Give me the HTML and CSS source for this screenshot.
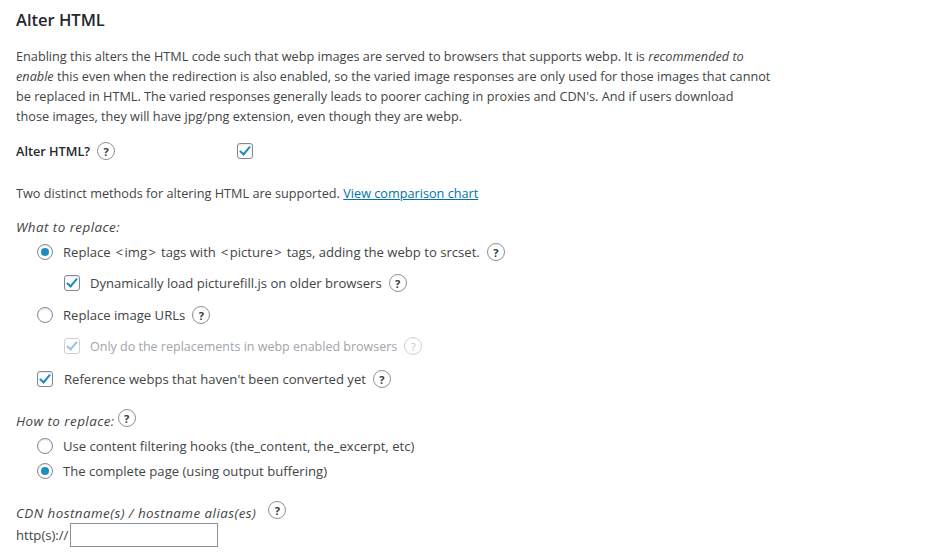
FILE: index.html
```html
<!DOCTYPE html>
<html lang="en">
<head>
    <meta charset="UTF-8">
    <title>Alter HTML</title>
    <link rel="stylesheet" href="styles.css">
</head>
<body>
    <div class="wrap">
        <h2 class="title">Alter HTML</h2>
        <p class="intro">Enabling this alters the HTML code such that webp images are served to browsers that supports webp. It is <em>recommended to<br>enable</em> this even when the redirection is also enabled, so the varied image responses are only used for those images that cannot<br>be replaced in HTML. The varied responses generally leads to poorer caching in proxies and CDN's. And if users download<br>those images, they will have jpg/png extension, even though they are webp.</p>

        <div class="row row-main">
            <div class="th">Alter HTML? <span class="help">?</span></div>
            <span class="cb checked"></span>
        </div>

        <div class="row row-desc">Two distinct methods for altering HTML are supported.&nbsp;<a href="#">View comparison chart</a></div>

        <div class="row row-head"><em>What to replace:</em></div>
        <div class="row opt first">
            <span class="radio checked"></span>
            <span class="lbl">Replace <span class="br">&lt;</span>img<span class="br">&gt;</span> tags with <span class="br">&lt;</span>picture<span class="br">&gt;</span> tags, adding the webp to srcset.</span>
            <span class="help">?</span>
        </div>
        <div class="row opt sub">
            <span class="cb checked"></span>
            <span class="lbl">Dynamically load picturefill.js on older browsers</span>
            <span class="help">?</span>
        </div>
        <div class="row opt gap12">
            <span class="radio"></span>
            <span class="lbl">Replace image URLs</span>
            <span class="help">?</span>
        </div>
        <div class="row opt sub disabled">
            <span class="cb checked"></span>
            <span class="lbl">Only do the replacements in webp enabled browsers</span>
            <span class="help">?</span>
        </div>
        <div class="row opt gap13">
            <span class="cb checked"></span>
            <span class="lbl lbl-cb">Reference webps that haven't been converted yet</span>
            <span class="help">?</span>
        </div>

        <div class="row row-head head-how"><em>How to replace:</em><span class="help raised">?</span></div>
        <div class="row opt first">
            <span class="radio"></span>
            <span class="lbl">Use content filtering hooks (the_content, the_excerpt, etc)</span>
        </div>
        <div class="row opt first">
            <span class="radio checked"></span>
            <span class="lbl">The complete page (using output buffering)</span>
        </div>

        <div class="row row-head head-cdn"><em>CDN hostname(s) / hostname alias(es)</em><span class="help raised wide">?</span></div>
        <div class="row row-input">http(s)://<input type="text" class="text"></div>
    </div>
</body>
</html>
```

FILE: styles.css
```css
body {
    margin: 0;
    background: #fff;
    color: #444;
    font-family: "Open Sans", sans-serif;
    font-size: 13.1px;
}
.wrap {
    padding: 0 16px;
    width: 800px;
}
.title {
    margin: 9px 0 0;
    font-size: 16.5px;
    line-height: 22px;
    font-weight: 600;
    color: #23282d;
}
.intro {
    margin: 15px 0 0;
    line-height: 20px;
    font-size: 12.7px;
}
.row {
    display: flex;
    align-items: center;
    height: 20px;
    white-space: nowrap;
}
.row-main {
    margin-top: 15px;
}
.th {
    width: 221px;
    display: flex;
    align-items: center;
    font-weight: 600;
    font-size: 12.7px;
    color: #23282d;
}
.row-desc {
    margin-top: 22px;
    font-size: 12.7px;
}
a {
    color: #0073aa;
}
.row-head {
    margin-top: 14px;
}
.row-head em {
    font-size: 13.4px;
    letter-spacing: 0.45px;
}
.head-how,
.head-cdn {
    margin-top: 22px;
}
.opt {
    margin-top: 11px;
    padding-left: 21px;
}
.opt.first {
    margin-top: 5px;
}
.opt.gap12 {
    margin-top: 12px;
}
.opt.gap13 {
    margin-top: 13px;
}
.opt.sub {
    padding-left: 48px;
}
.lbl {
    margin-left: 10px;
}
.lbl-cb {
    margin-left: 11px;
}
.br {
    margin: 0 1.5px;
}
.help {
    display: inline-flex;
    align-items: center;
    justify-content: center;
    width: 16px;
    height: 16px;
    border: 1px solid #8c8f94;
    border-radius: 50%;
    margin-left: 7px;
    font-size: 11px;
    font-weight: 700;
    font-style: normal;
    letter-spacing: 0;
    color: #32373c;
    line-height: 1;
}
.help.raised {
    margin-left: 3px;
    position: relative;
    top: -3px;
}
.help.wide {
    margin-left: 12px;
}
.cb,
.radio {
    display: inline-block;
    box-sizing: border-box;
    width: 16px;
    height: 16px;
    border: 1px solid #7e8993;
    background: #fff;
    box-shadow: inset 0 1px 2px rgba(0,0,0,0.1);
    flex: none;
    position: relative;
}
.cb {
    border-radius: 3px;
}
.radio {
    border-radius: 50%;
}
.radio.checked::after {
    content: "";
    position: absolute;
    left: 3px;
    top: 3px;
    width: 8px;
    height: 8px;
    border-radius: 50%;
    background: #1e8cbe;
}
.cb.checked::after {
    content: "";
    position: absolute;
    left: 4px;
    top: 0;
    width: 4px;
    height: 9px;
    border: solid #1e8cbe;
    border-width: 0 2.5px 2.5px 0;
    transform: rotate(40deg);
}
.disabled {
    color: #a0a5aa;
    font-size: 12.5px;
}
.disabled .cb {
    border-color: #ccd0d4;
    box-shadow: none;
}
.disabled .cb.checked::after {
    border-color: #9ac6e0;
}
.disabled .help {
    border-color: #ccd0d4;
    color: #c3c4c7;
    font-weight: 400;
}
.row-input {
    margin-top: 0;
    height: 24px;
}
.text {
    box-sizing: border-box;
    width: 148px;
    height: 24px;
    margin: 0 0 0 2px;
    border: 1px solid #8c8f94;
    font: inherit;
}
```
